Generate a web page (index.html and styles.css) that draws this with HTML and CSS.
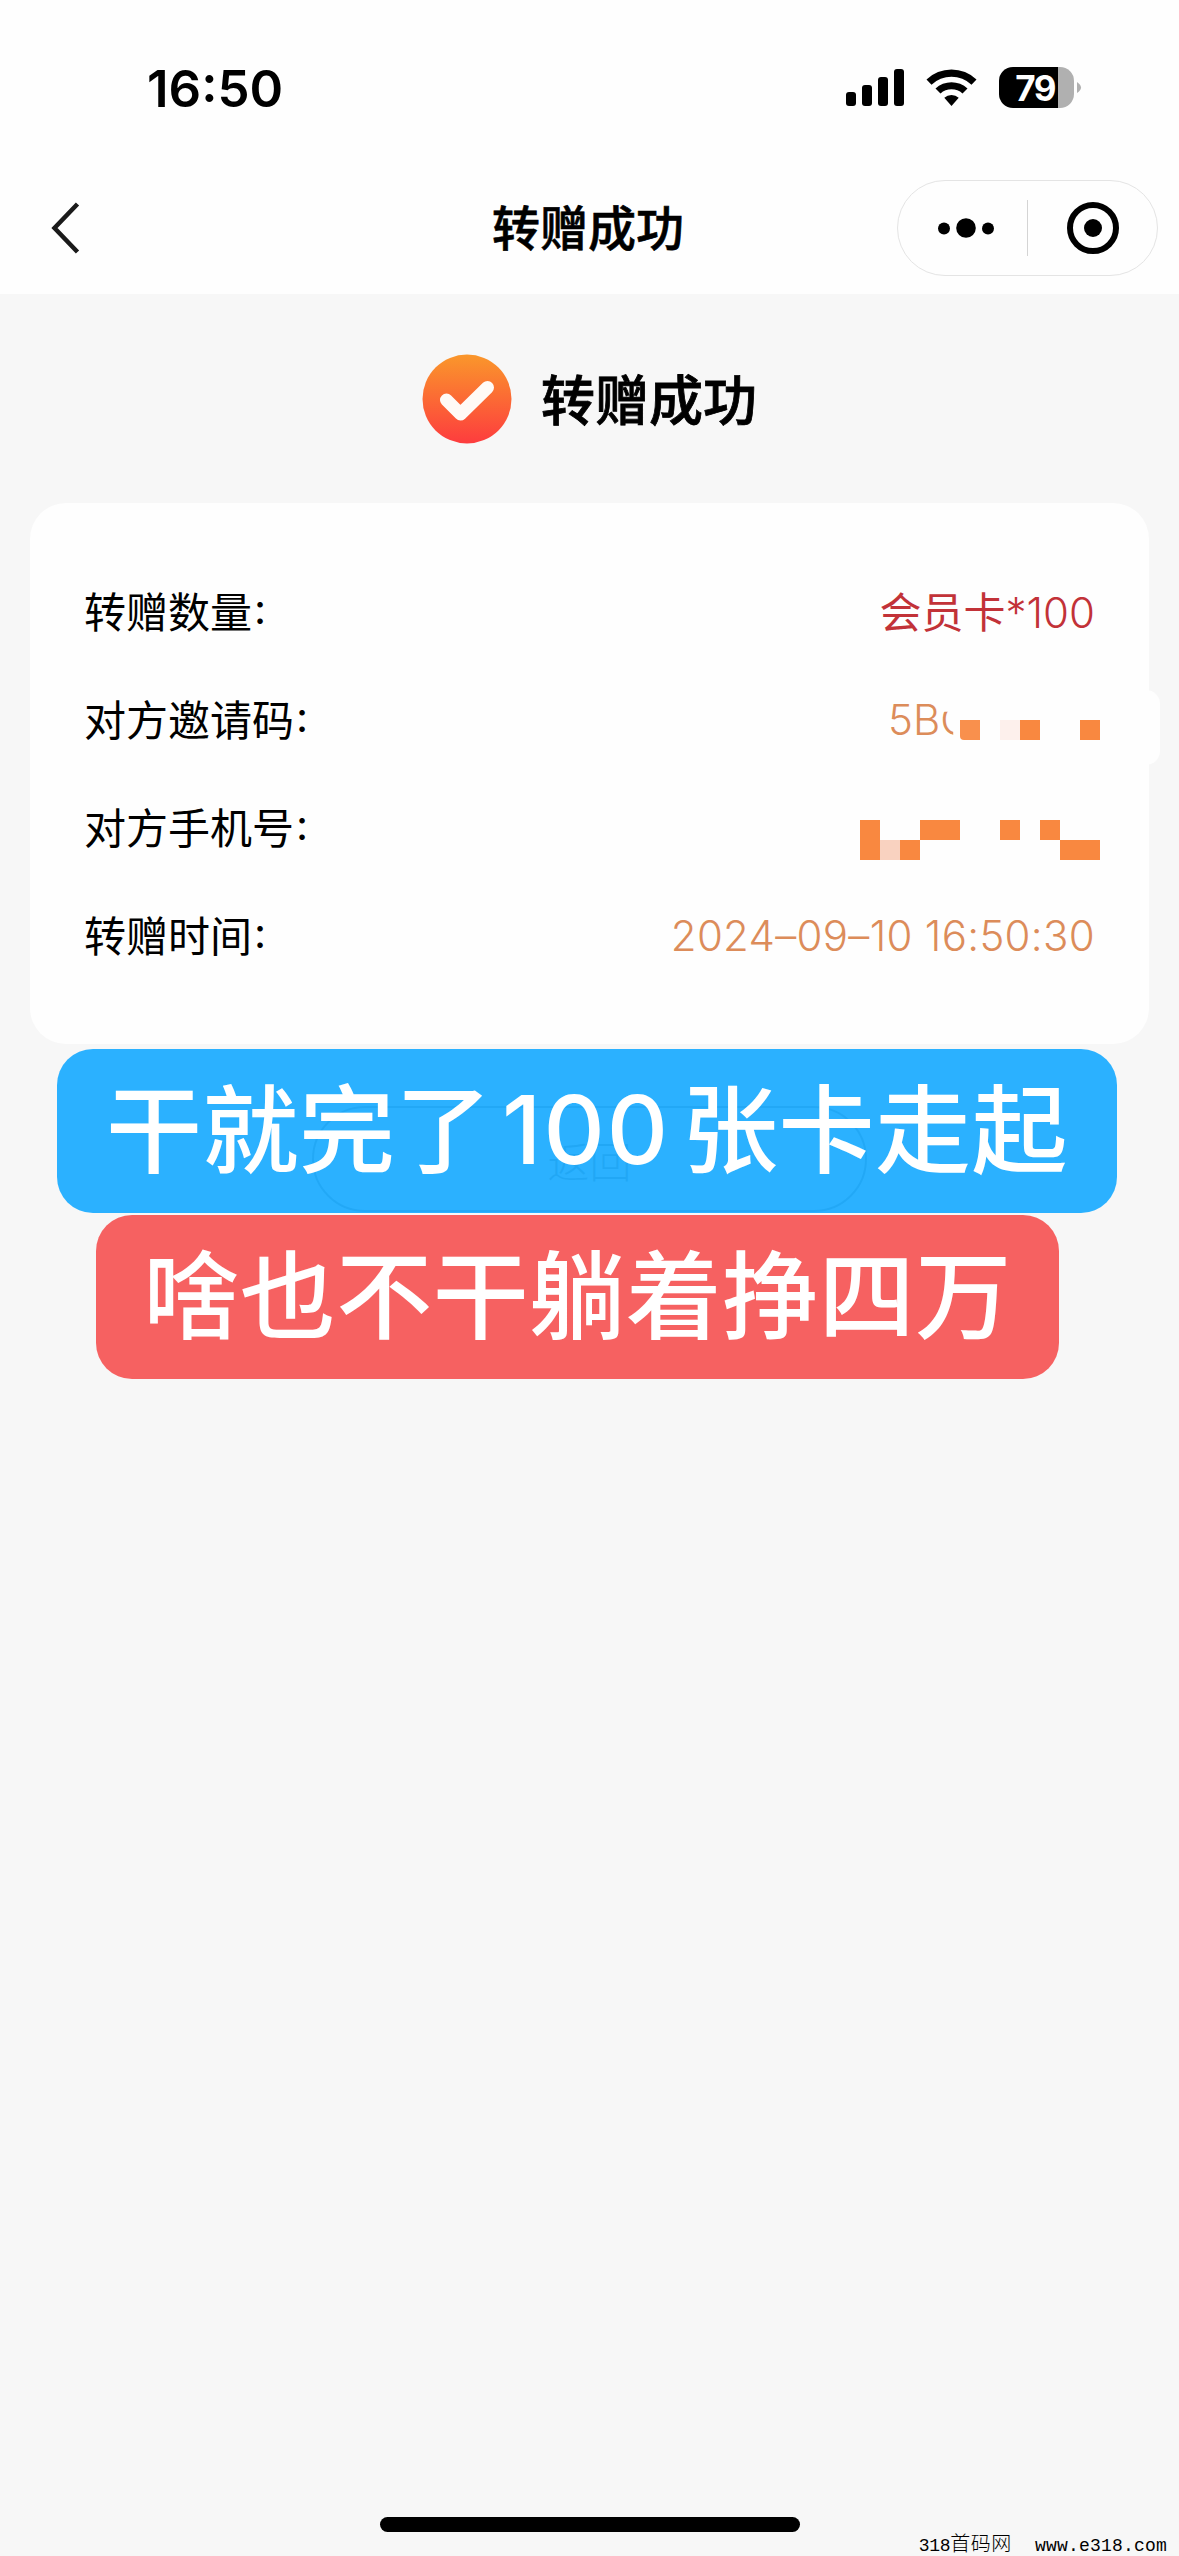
FILE: index.html
```html
<!DOCTYPE html>
<html lang="zh-CN">
<head>
<meta charset="utf-8">
<title>转赠成功</title>
<link rel="stylesheet" href="styles.css">
</head>
<body>
<div class="screen">
  <header class="top">
    <div class="status">
      <span class="time">16:50</span>
      <svg class="status-icons" width="236" height="42" viewBox="0 0 236 42">
        <rect x="0" y="25" width="10" height="14" rx="3"/>
        <rect x="16" y="18" width="10" height="21" rx="3"/>
        <rect x="32" y="10" width="10" height="29" rx="3"/>
        <rect x="48" y="2" width="10" height="37" rx="3"/>
        <path d="M80.5 12.5 A36 36 0 0 1 130.5 12.5 L125.500 17.800 A29 29 0 0 0 85.500 17.800 Z"/>
        <path d="M89.500 21.500 A23.500 23.500 0 0 1 121.500 21.500 L116.500 26.500 A16.500 16.500 0 0 0 94.500 26.500 Z"/>
        <path d="M98.300 30.800 A10.500 10.500 0 0 1 112.700 30.800 L105.500 39 Z"/>
        <path d="M167 0 H212 V41 H167 A14 14 0 0 1 153 27 V14 A14 14 0 0 1 167 0 Z"/>
        <path class="battery-rest" d="M212 0 H214 A14 14 0 0 1 228 14 V27 A14 14 0 0 1 214 41 H212 Z"/>
        <path class="battery-rest" d="M231 15 Q239 20.500 231 26 Z"/>
        <text class="battery-text" x="189" y="33.500" text-anchor="middle">79</text>
      </svg>
    </div>
    <nav class="nav">
      <svg class="back" width="30" height="52" viewBox="0 0 30 52"><path d="M26.500 2 L3.500 26 L26.500 50"/></svg>
      <h1 class="nav-title">转赠成功</h1>
      <div class="capsule">
        <svg width="56" height="20" viewBox="0 0 56 20"><circle cx="6" cy="10.500" r="6"/><circle cx="28" cy="10" r="9.800"/><circle cx="50" cy="10.500" r="6"/></svg>
        <span class="capsule-line"></span>
        <svg width="52" height="52" viewBox="0 0 52 52"><circle class="ring" cx="26" cy="26" r="23"/><circle cx="26" cy="26" r="9"/></svg>
      </div>
    </nav>
  </header>

  <main class="content">
    <div class="result">
      <svg width="90" height="90" viewBox="0 0 90 90">
        <defs><linearGradient id="sun" x1="0" y1="0" x2="0" y2="1"><stop offset="0" stop-color="#fa972b"/><stop offset="1" stop-color="#fd3c3e"/></linearGradient></defs>
        <circle cx="45" cy="45" r="44.500" fill="url(#sun)"/>
        <path class="tick" d="M24.500 46 L38.500 60 L65.500 33.500"/>
      </svg>
      <h2 class="result-title">转赠成功</h2>
    </div>

    <section class="card">
      <div class="row"><span class="label">转赠数量<i>:</i></span><span class="value count">会员卡<b>*100</b></span></div>
      <div class="row"><span class="label">对方邀请码<i>:</i></span><span class="value code">5B<span class="cut">C</span></span></div>
      <div class="row"><span class="label">对方手机号<i>:</i></span></div>
      <div class="row"><span class="label">转赠时间<i>:</i></span><span class="value date">2024–09–10 16:50:30</span></div>
      <svg class="mosaic" width="300" height="176" viewBox="860 690 300 176">
        <rect class="patch" x="1130" y="690" width="30" height="75" rx="14"/>
        <path d="M960 720h20v20h-16q-4 0-4-4z" opacity=".93"/>
        <path d="M1020 720h20v20h-20zM1080 720h20v20h-20z"/>
        <path d="M860 820h20v40h-20zM900 840h20v20h-20zM920 820h40v20h-40zM1000 820h20v20h-20zM1040 820h20v20h-20zM1060 840h40v20h-40z"/>
        <rect class="pale" x="1000" y="720" width="20" height="20"/>
        <rect class="pink" x="880" y="840" width="20" height="20"/>
      </svg>
    </section>

    <button class="return">返回</button>
  </main>

  <div class="caption blue"><span>干就完了</span><span class="num">100</span><span>张卡走起</span></div>
  <div class="caption red">啥也不干躺着挣四万</div>

  <footer class="bottom">
    <div class="home"></div>
    <div class="mark"><span class="mark-num">318</span><span class="mark-cn">首码网</span><span class="mark-url">www.e318.com</span></div>
  </footer>
</div>
</body>
</html>
```
FILE: styles.css
```css
* { box-sizing: border-box; }

body {
  margin: 0;
  background: #f7f7f7;
  font-family: Inter, "Noto Sans CJK SC", sans-serif;
  color: #000;
}

.screen {
  position: relative;
  width: 1179px;
  height: 2556px;
  overflow: hidden;
  display: flex;
  flex-direction: column;
}

.top { height: 294px; background: #fefefe; }

.status {
  height: 162px;
  padding: 67px 97px 0 147px;
  display: flex;
  justify-content: space-between;
  align-items: flex-start;
}
.time {
  font-size: 51px;
  font-weight: 600;
  line-height: 43px;
  letter-spacing: 0;
}
.battery-rest { fill: #b0b0b0; }
.battery-text { fill: #fff; font-size: 35px; font-weight: 700; letter-spacing: -1.5px; }

.nav {
  height: 132px;
  padding: 0 21px 0 51px;
  display: grid;
  grid-template-columns: 261px 1fr 261px;
  align-items: center;
}
.back { fill: none; stroke: #1a1a1a; stroke-width: 4.5; }
.nav-title {
  margin: -7px 0 0 -33px;
  font-size: 48px;
  font-weight: 500;
  -webkit-text-stroke: 0.6px #000;
  text-align: center;
}
.capsule {
  width: 261px;
  height: 96px;
  border: 1.5px solid #e4e4e4;
  border-radius: 48px;
  display: flex;
  align-items: center;
  padding: 0 38px 0 40px;
  justify-content: space-between;
}
.capsule-line { width: 1.5px; height: 56px; background: #d4d4d4; margin: 0 6px 0 0; }
.ring { fill: none; stroke: #000; stroke-width: 6; }

.content { flex: 1; padding: 0 30px; }

.result {
  height: 209px;
  display: flex;
  justify-content: center;
  align-items: center;
  gap: 29px;
}
.tick {
  fill: none;
  stroke: #fffaf6;
  stroke-width: 13;
  stroke-linecap: round;
  stroke-linejoin: round;
}
.result-title {
  margin: -2px 0 0;
  font-size: 54px;
  font-weight: 500;
  -webkit-text-stroke: 0.8px #000;
}

.card {
  position: relative;
  height: 541px;
  padding: 52px 54px 56px 54px;
  border-radius: 36px;
  background: #fefefe;
}
.row {
  height: 108px;
  display: flex;
  justify-content: space-between;
  align-items: center;
  font-size: 42px;
  white-space: nowrap;
}
.label { font-weight: 400; }
.label i { display: inline-block; font-style: normal; margin-left: 2px; transform: translateY(-4px); }
.value { color: #dc8c5a; font-weight: 350; }
.count { color: #c23238; font-weight: 400; }
.count b { font-weight: 350; }
.code { width: 207px; padding-top: 5px; }
.date { padding-top: 4px; letter-spacing: 0.3px; }
.cut {
  display: inline-block;
  clip-path: polygon(0 35%, 13px 35%, 13px 100%, 0 100%);
}

.mosaic { position: absolute; left: 830px; top: 187px; fill: #f98840; }
.patch { fill: #fefefe; }
.pale { fill: #fdf0ec; }
.pink { fill: #f9d2c0; }

.return {
  display: block;
  width: 555px;
  height: 106px;
  margin: 62px auto 0;
  border: 2px solid #555;
  border-radius: 53px;
  background: none;
  font: 300 42px "Noto Sans CJK SC", sans-serif;
  color: #444;
}

.caption {
  position: absolute;
  height: 164px;
  border-radius: 36px;
  display: flex;
  justify-content: center;
  color: #fff;
  font-size: 96px;
  font-weight: 500;
  line-height: 162px;
  letter-spacing: 0.5px;
  white-space: nowrap;
}
.blue {
  left: 57px;
  top: 1049px;
  width: 1060px;
  background: rgba(32, 173, 255, 0.95);
}
.red {
  left: 96px;
  top: 1215px;
  width: 963px;
  background: #f66161;
}
.num { font-size: 95px; margin: 0 12px 0 10px; letter-spacing: 2px; }

.bottom { height: 39px; position: relative; }
.home {
  width: 420px;
  height: 15px;
  margin: 0 auto;
  border-radius: 8px;
  background: #000;
}
.mark {
  display: flex;
  justify-content: flex-end;
  padding-right: 12px;
  font: 18px/20px "Liberation Mono", "Noto Sans CJK SC", monospace;
  margin-top: 4px;
}
.mark-num { letter-spacing: -0.3px; }
.mark-cn { font-size: 20px; font-weight: 300; margin-right: 23px; letter-spacing: 0.6px; }
.mark-url { letter-spacing: 0.2px; }
```
